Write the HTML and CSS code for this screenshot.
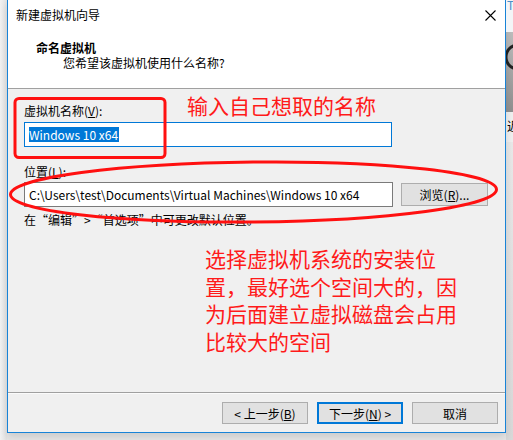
FILE: index.html
```html
<!DOCTYPE html>
<html lang="zh-CN">
<head>
<meta charset="utf-8">
<title>新建虚拟机向导</title>
<link rel="stylesheet" href="styles.css">
</head>
<body>
<div class="screen">
  <div class="shadow-left"></div>
  <div class="window">
    <div class="header">
      <div class="titlebar">
        <span class="title">新建虚拟机向导</span>
        <svg class="close" width="11" height="11" viewBox="0 0 11 11"><path d="M0.5 0.5 L10.5 10.5 M10.5 0.5 L0.5 10.5" stroke="#000" stroke-width="1.1" fill="none"/></svg>
      </div>
      <div class="head-title">命名虚拟机</div>
      <div class="head-sub">您希望该虚拟机使用什么名称?</div>
    </div>
    <div class="content">
      <div class="label">虚拟机名称(<u>V</u>):</div>
      <div class="input focused"><span class="sel">Windows 10 x64</span></div>
      <div class="label label2">位置(<u>L</u>):</div>
      <div class="row">
        <div class="input path">C:\Users\test\Documents\Virtual Machines\Windows 10 x64</div>
        <div class="btn browse">浏览(<u>R</u>)...</div>
      </div>
      <div class="hint">在“编辑”&gt;“首选项”中可更改默认位置。</div>
    </div>
    <div class="footer">
      <div class="btn">&lt; 上一步(<u>B</u>)</div>
      <div class="btn default">下一步(<u>N</u>) &gt;</div>
      <div class="btn">取消</div>
    </div>
    <div class="note note1">输入自己想取的名称</div>
    <div class="note note2">选择虚拟机系统的安装位<br>置，最好选个空间大的，因<br>为后面建立虚拟磁盘会占用<br>比较大的空间</div>
  </div>
  <div class="desktop">
    <div class="d-top"><span class="d-t">T</span></div>
    <div class="d-mid"></div>
    <div class="d-low"><span class="d-char">近</span></div>
    <div class="d-rest"></div>
  </div>
</div>
<svg class="marks" width="513" height="440" viewBox="0 0 513 440">
  <rect x="15" y="98.5" width="150" height="59" rx="4" ry="4" fill="none" stroke="#ff1010" stroke-width="3"/>
  <ellipse cx="253.5" cy="192" rx="243" ry="30" fill="none" stroke="#ff1010" stroke-width="3" transform="rotate(-0.6 253.5 192)"/>
</svg>
</body>
</html>
```
FILE: styles.css
```css
html, body {
  margin: 0;
  padding: 0;
}
body {
  width: 513px;
  height: 440px;
  overflow: hidden;
  position: relative;
  background: #e6e6e6;
  font-family: "Noto Sans CJK SC", "Noto Sans", sans-serif;
  font-size: 12px;
  color: #000;
}
u { text-decoration: underline; text-underline-offset: 1px; }

.screen {
  display: flex;
  height: 440px;
}
.shadow-left {
  width: 7px;
  flex: none;
  background: linear-gradient(to right, #f2f2f2, #e2e2e2);
}
.window {
  position: relative;
  width: 497px;
  height: 432px;
  flex: none;
  border: 1px solid #1883d7;
  border-top: 0;
  background: #f0f0f0;
  display: flex;
  flex-direction: column;
  box-shadow: 0 4px 8px rgba(0,0,0,0.12);
}
.header {
  height: 88px;
  background: #fff;
  border-bottom: 1px solid #a0a0a0;
  flex: none;
}
.titlebar {
  height: 30px;
  display: flex;
  align-items: center;
  justify-content: space-between;
  padding: 0 9px 0 8px;
}
.title { line-height: 30px; }
.close { display: block; }
.head-title {
  margin-top: 10px;
  padding-left: 28px;
  line-height: 15px;
  font-weight: bold;
}
.head-sub {
  padding-left: 55px;
  line-height: 15px;
}
.content {
  height: 303px;
  flex: none;
  padding: 14px 0 0 16px;
  box-sizing: border-box;
}
.label { line-height: 16px; }
.label2 { margin-top: 17px; }
.input {
  box-sizing: border-box;
  height: 25px;
  background: #fff;
  border: 1px solid #7a7a7a;
  display: flex;
  align-items: center;
  padding-left: 4px;
  white-space: nowrap;
  overflow: hidden;
}
.focused {
  width: 368px;
  margin-top: 3px;
  border-color: #0078d7;
}
.sel {
  background: #0078d7;
  color: #fff;
  line-height: 15px;
  padding-right: 1px;
}
.row {
  display: flex;
  align-items: center;
  margin-top: 2px;
}
.path { width: 369px; }
.btn {
  box-sizing: border-box;
  width: 86px;
  height: 22px;
  background: #e1e1e1;
  border: 1px solid #adadad;
  display: flex;
  align-items: center;
  justify-content: center;
  flex: none;
}
.browse {
  width: 87px;
  height: 23px;
  margin-left: 8px;
}
.hint {
  margin-top: 5px;
  line-height: 16px;
}
.footer {
  flex: none;
  height: 39px;
  border-top: 1px solid #a0a0a0;
  box-shadow: inset 0 1px 0 #fbfbfb;
  display: flex;
  justify-content: flex-end;
  gap: 9px;
  padding: 9px 7px 0 0;
  box-sizing: content-box;
}
.footer .btn { width: 86px; }
.default { border: 2px solid #0078d7; }

.note {
  position: absolute;
  color: #ff1a1a;
  font-size: 21px;
  white-space: nowrap;
}
.note1 {
  left: 179px;
  top: 93px;
  line-height: 24px;
}
.note2 {
  left: 197px;
  top: 245px;
  line-height: 27.5px;
}

.desktop {
  flex: 1;
  display: flex;
  flex-direction: column;
  overflow: hidden;
}
.d-top {
  height: 32px;
  background: #f3f5f7;
  position: relative;
}
.d-t {
  color: #4a90c8;
  font-size: 12px;
  line-height: 10px;
  display: block;
  padding-left: 1px;
}
.d-mid {
  height: 80px;
  background: radial-gradient(circle at 12px 25px, transparent 10px, #222 11px, #222 13px, transparent 14px), linear-gradient(#bdbdbd, #8f8f8f);
}
.d-low {
  height: 30px;
  background: #efefef;
}
.d-char {
  display: block;
  font-size: 12px;
  line-height: 12px;
  margin-top: 8px;
  margin-left: 1px;
}
.d-rest {
  flex: 1;
  background: linear-gradient(#e8e8e8, #d8d8d8);
}
.marks {
  position: absolute;
  left: 0;
  top: 0;
  pointer-events: none;
}
```
